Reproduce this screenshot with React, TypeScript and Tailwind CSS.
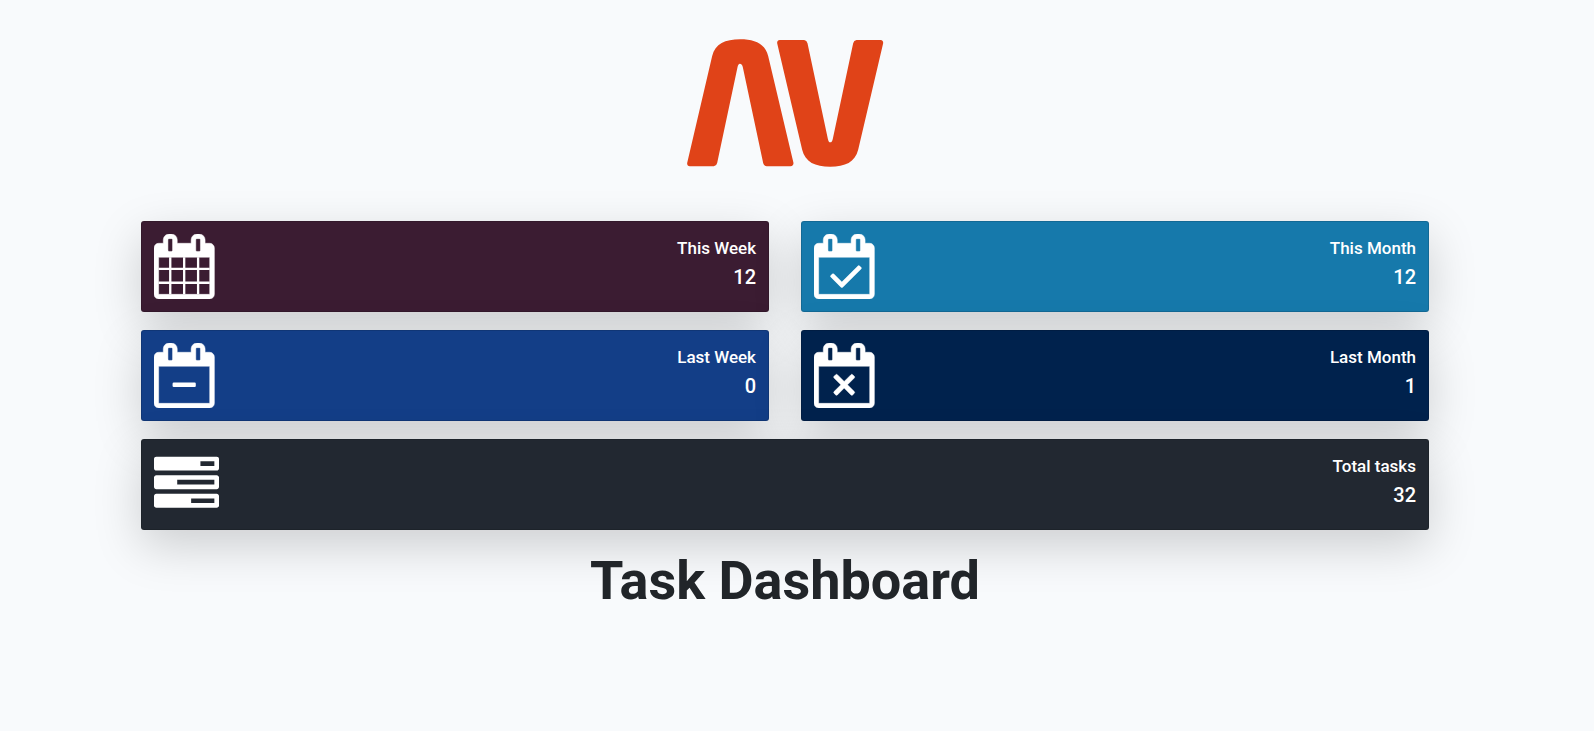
import type { ReactNode } from "react";

const CALENDAR_FRAME =
  "M192 1664h1408v-1024h-1408v1024zm384-1216v-288q0-13-9.5-22.5t-22.5-9.5h-64q-13 0-22.5 9.5t-9.5 22.5v288q0 13 9.5 22.5t22.5 9.5h64q13 0 22.5-9.5t9.5-22.5zm768 0v-288q0-13-9.5-22.5t-22.5-9.5h-64q-13 0-22.5 9.5t-9.5 22.5v288q0 13 9.5 22.5t22.5 9.5h64q13 0 22.5-9.5t9.5-22.5zm384-64v1280q0 52-38 90t-90 38h-1408q-52 0-90-38t-38-90v-1280q0-52 38-90t90-38h128v-96q0-66 47-113t113-47h64q66 0 113 47t47 113v96h384v-96q0-66 47-113t113-47h64q66 0 113 47t47 113v96h128q52 0 90 38t38 90z";

function Calendar({ children }: { children: ReactNode }) {
  return (
    <svg viewBox="64 0 1792 1792" className="size-[65px] shrink-0 fill-white" aria-hidden="true">
      <path fillRule="evenodd" d={CALENDAR_FRAME} className="stroke-white" strokeWidth="14" />
      {children}
    </svg>
  );
}

function GridCalendar() {
  return (
    <Calendar>
      <path d="M480 640h64v1024h-64zM864 640h64v1024h-64zM1248 640h64v1024h-64zM192 928h1408v64h-1408zM192 1312h1408v64h-1408z" />
    </Calendar>
  );
}

function CheckCalendar() {
  return (
    <Calendar>
      <path d="M1367 964l-512 512q-10 9-23 9t-23-9l-288-288q-9-10-9-23t9-22l46-46q9-9 22-9t23 9l220 220 444-444q10-9 23-9t22 9l46 46q9 9 9 22t-9 23z" />
    </Calendar>
  );
}

function MinusCalendar() {
  return (
    <Calendar>
      <rect x="576" y="1088" width="640" height="128" rx="32" />
    </Calendar>
  );
}

function TimesCalendar() {
  return (
    <Calendar>
      <path
        d="M1175 1385l-46 46q-9 9-22 9t-23-9l-188-189-188 189q-10 9-23 9t-22-9l-46-46q-9-9-9-22t9-23l189-188-189-188q-9-10-9-23t9-22l46-46q9-9 22-9t23 9l188 188 188-188q10-9 23-9t22 9l46 46q9 9 9 22t-9 23l-188 188 188 188q9 10 9 23t-9 22z"
        className="stroke-white"
        strokeWidth="14"
      />
    </Calendar>
  );
}

function Tasks() {
  return (
    <svg viewBox="0 0 1792 1792" className="size-[65px] shrink-0 fill-white" aria-hidden="true">
      <path
        fillRule="evenodd"
        d="M1024 1408h640v-128h-640v128zm-384-512h1024v-128h-1024v128zm640-512h384v-128h-384v128zm512 832v256q0 26-19 45t-45 19h-1664q-26 0-45-19t-19-45v-256q0-26 19-45t45-19h1664q26 0 45 19t19 45zm0-512v256q0 26-19 45t-45 19h-1664q-26 0-45-19t-19-45v-256q0-26 19-45t45-19h1664q26 0 45 19t19 45zm0-512v256q0 26-19 45t-45 19h-1664q-26 0-45-19t-19-45v-256q0-26 19-45t45-19h1664q26 0 45 19t19 45z"
      />
    </svg>
  );
}

function Logo() {
  return (
    <svg viewBox="51 57 590 384" className="h-32 w-[197px]" role="img" aria-label="AV">
      <g fill="#e04318">
        <path d="M59 439Q50 438 51 429L126 108C135 72 165 58 210 58C255 58 285 72 294 108L370 429Q370 438 361 439H290Q281 438 279 429L218 142Q216 131 209 131Q204 131 202 142L141 429Q139 438 131 439Z" />
        <path d="M329 60Q320 61 321 70L396 389C405 426 435 440 480 440C525 440 555 426 564 389L639 70Q640 61 631 60H559Q551 61 549 70L488 356Q486 367 480 367Q475 367 473 356L412 70Q410 61 402 60Z" />
      </g>
    </svg>
  );
}

type StatCardProps = {
  label: string;
  value: number;
  icon: ReactNode;
  className: string;
};

function StatCard({ label, value, icon, className }: StatCardProps) {
  return (
    <section
      className={`flex items-start justify-between rounded-[3px] border border-black/[.125] p-3 text-white shadow-[0_16px_48px_rgba(0,0,0,0.175)] ${className}`}
    >
      {icon}
      <div className="pt-0.5 text-right font-medium">
        <h2 className="text-[17px] leading-6">{label}</h2>
        <p className="text-xl leading-[34px]">{value}</p>
      </div>
    </section>
  );
}

export default function App() {
  return (
    <main className="min-h-screen bg-[#f8fafc] pr-6 font-['Roboto',sans-serif] text-[#212529]">
      <div className="mx-auto flex max-w-[1320px] flex-col px-4 pt-[39px] pb-8">
        <header className="flex justify-center">
          <Logo />
        </header>
        <div className="mt-[54px] grid grid-cols-1 gap-x-8 gap-y-[18px] md:grid-cols-2">
          <StatCard label="This Week" value={12} icon={<GridCalendar />} className="bg-[#3b1c32]" />
          <StatCard label="This Month" value={12} icon={<CheckCalendar />} className="bg-[#1679ab]" />
          <StatCard label="Last Week" value={0} icon={<MinusCalendar />} className="bg-[#133e87]" />
          <StatCard label="Last Month" value={1} icon={<TimesCalendar />} className="bg-[#00224d]" />
          <StatCard label="Total tasks" value={32} icon={<Tasks />} className="bg-[#222831] md:col-span-2" />
        </div>
        <h1 className="mt-[19px] text-center text-[54px] leading-[64px] font-bold">Task Dashboard</h1>
      </div>
    </main>
  );
}
